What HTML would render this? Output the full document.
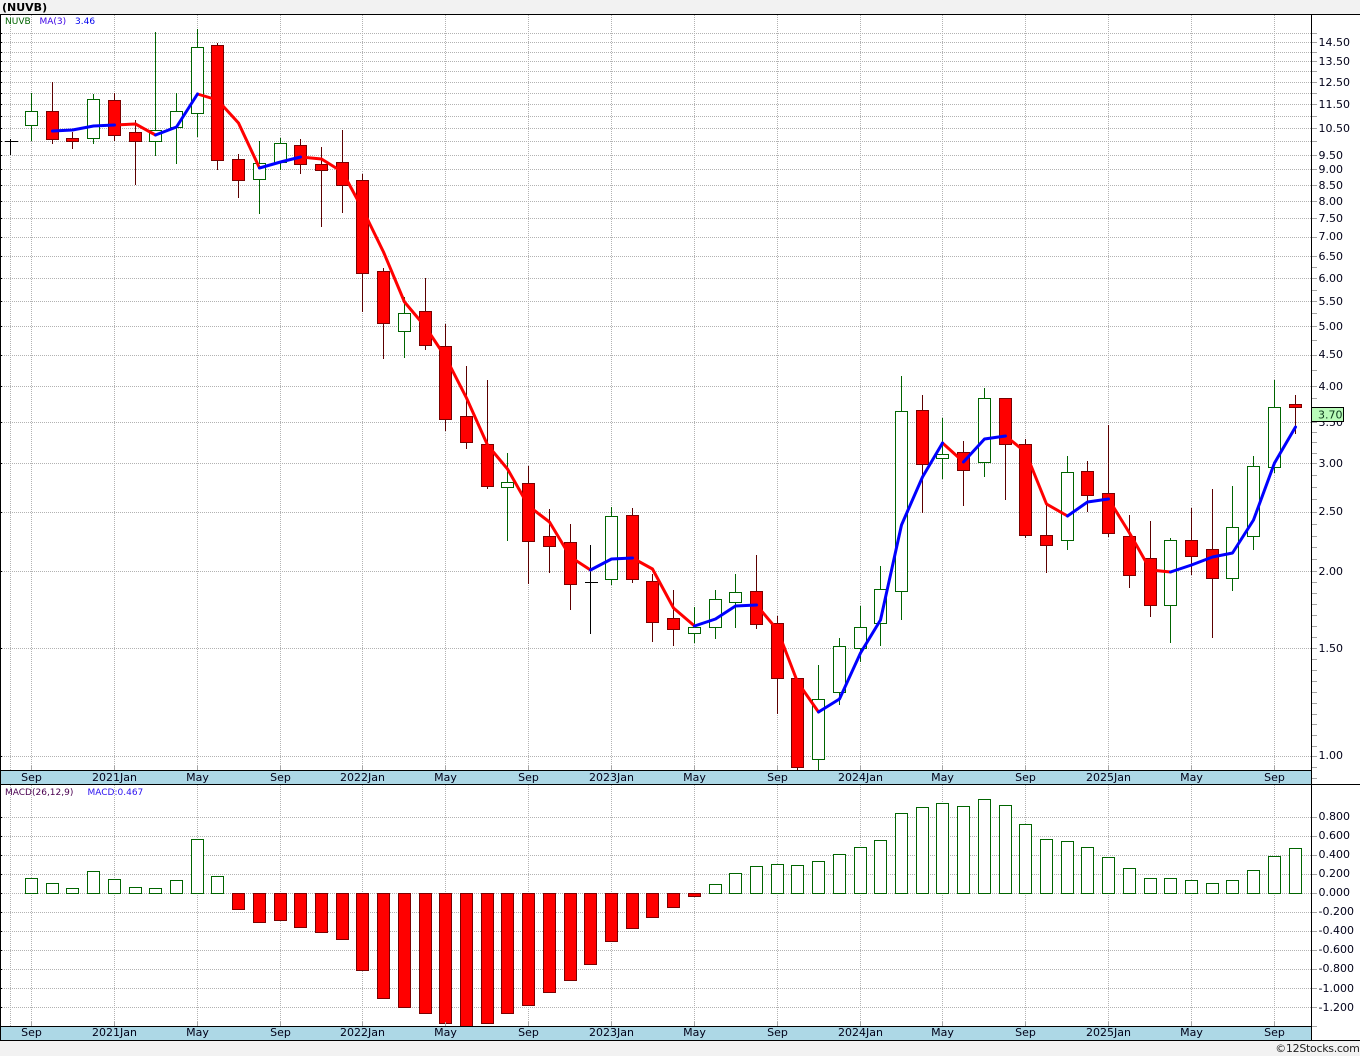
<!DOCTYPE html>
<html><head><meta charset="utf-8"><title>NUVB</title>
<style>
html,body{margin:0;padding:0;background:#f2f2f2;width:1360px;height:1056px;overflow:hidden}
svg{display:block}
text{font-family:"DejaVu Sans","Liberation Sans",sans-serif;font-size:11px;fill:#000018}
.l{font-size:9px}
</style></head><body>
<svg width="1360" height="1056" viewBox="0 0 1360 1056" xmlns="http://www.w3.org/2000/svg">
<rect x="0" y="0" width="1360" height="1056" fill="#f2f2f2"/>
<rect x="0" y="14" width="1360" height="1026" fill="#fff"/>
<!-- grid -->
<g stroke="#b2b2b2" stroke-width="1" stroke-dasharray="1 1" fill="none" shape-rendering="crispEdges">
<path d="M0 33.5H1311M0 42.5H1311M0 52.5H1311M0 61.5H1311M0 71.5H1311M0 82.5H1311M0 93.5H1311M0 104.5H1311M0 116.5H1311M0 128.5H1311M0 141.5H1311M0 155.5H1311M0 169.5H1311M0 185.5H1311M0 201.5H1311M0 218.5H1311M0 237.5H1311M0 256.5H1311M0 278.5H1311M0 301.5H1311M0 326.5H1311M0 355.5H1311M0 386.5H1311M0 422.5H1311M0 463.5H1311M0 512.5H1311M0 571.5H1311M0 648.5H1311M0 756.5H1311"/>
<path d="M0 817.5H1311M0 836.5H1311M0 855.5H1311M0 874.5H1311M0 893.5H1311M0 912.5H1311M0 931.5H1311M0 950.5H1311M0 969.5H1311M0 988.5H1311M0 1007.5H1311"/>
<path d="M10.5 15V770M31.5 15V770M114.5 15V770M197.5 15V770M280.5 15V770M362.5 15V770M445.5 15V770M528.5 15V770M611.5 15V770M694.5 15V770M777.5 15V770M860.5 15V770M942.5 15V770M1025.5 15V770M1108.5 15V770M1191.5 15V770M1274.5 15V770"/>
<path d="M10.5 785V1026M31.5 785V1026M114.5 785V1026M197.5 785V1026M280.5 785V1026M362.5 785V1026M445.5 785V1026M528.5 785V1026M611.5 785V1026M694.5 785V1026M777.5 785V1026M860.5 785V1026M942.5 785V1026M1025.5 785V1026M1108.5 785V1026M1191.5 785V1026M1274.5 785V1026"/>
</g>
<!-- wicks -->
<g fill="none" stroke-width="1" shape-rendering="crispEdges">
<path stroke="#000" d="M10.5 139V155M5 141.5H18M590.5 545V634M585 582.5H598"/>
<path stroke="#006400" d="M31.5 93V141M93.5 94V144M155.5 32V156M176.5 93V164M197.5 29V137M259.5 141V214M280.5 138V170M404.5 297V358M507.5 453V541M611.5 507V585M694.5 607V643M715.5 590V639M735.5 574V628M818.5 665V771M839.5 638V705M860.5 606V662M880.5 566V646M901.5 376V620M942.5 418V479M984.5 388V477M1067.5 456V550M1170.5 538V643M1232.5 486V591M1253.5 456V550M1274.5 380V473"/>
<path stroke="#5c0000" d="M52.5 82V144M72.5 132V149M114.5 93V141M135.5 120V185M217.5 43V170M238.5 154V198M300.5 139V174M321.5 147V227M342.5 130V213M362.5 174V312M383.5 268V359M425.5 278V350M445.5 324V431M466.5 366V449M487.5 380V489M528.5 466V584M549.5 509V573M570.5 524V610M632.5 508V583M652.5 574V642M673.5 590V646M756.5 555V629M777.5 616V714M797.5 678V770M922.5 395V513M963.5 441V506M1005.5 398V500M1025.5 439V538M1046.5 505V573M1087.5 461V512M1108.5 425V537M1129.5 515V588M1150.5 521V617M1191.5 508V575M1212.5 489V638M1295.5 395V434"/>
</g>
<!-- candle bodies -->
<g shape-rendering="crispEdges" stroke-width="1">
<path fill="#fff" stroke="#006400" d="M25.5 111.5h12V125.5h-12zM87.5 99.5h12V138.5h-12zM149.5 130.5h12V141.5h-12zM170.5 111.5h12V127.5h-12zM191.5 47.5h12V113.5h-12zM253.5 163.5h12V179.5h-12zM274.5 143.5h12V162.5h-12zM398.5 313.5h12V331.5h-12zM501.5 482.5h12V487.5h-12zM605.5 516.5h12V579.5h-12zM688.5 627.5h12V633.5h-12zM709.5 599.5h12V627.5h-12zM729.5 592.5h12V602.5h-12zM812.5 699.5h12V759.5h-12zM833.5 646.5h12V692.5h-12zM854.5 627.5h12V648.5h-12zM874.5 589.5h12V623.5h-12zM895.5 411.5h12V591.5h-12zM936.5 454.5h12V458.5h-12zM978.5 398.5h12V462.5h-12zM1061.5 472.5h12V540.5h-12zM1164.5 540.5h12V605.5h-12zM1226.5 527.5h12V578.5h-12zM1247.5 466.5h12V536.5h-12zM1268.5 407.5h12V467.5h-12z"/>
<path fill="#f00" stroke="#7a0000" d="M46.5 111.5h12V139.5h-12zM66.5 138.5h12V141.5h-12zM108.5 100.5h12V135.5h-12zM129.5 132.5h12V141.5h-12zM211.5 45.5h12V160.5h-12zM232.5 159.5h12V180.5h-12zM294.5 145.5h12V164.5h-12zM315.5 164.5h12V170.5h-12zM336.5 162.5h12V185.5h-12zM356.5 180.5h12V273.5h-12zM377.5 271.5h12V323.5h-12zM419.5 311.5h12V345.5h-12zM439.5 346.5h12V419.5h-12zM460.5 416.5h12V442.5h-12zM481.5 444.5h12V486.5h-12zM522.5 483.5h12V541.5h-12zM543.5 536.5h12V546.5h-12zM564.5 542.5h12V584.5h-12zM626.5 515.5h12V579.5h-12zM646.5 581.5h12V622.5h-12zM667.5 618.5h12V629.5h-12zM750.5 591.5h12V624.5h-12zM771.5 623.5h12V678.5h-12zM791.5 678.5h12V767.5h-12zM916.5 410.5h12V464.5h-12zM957.5 452.5h12V470.5h-12zM999.5 398.5h12V444.5h-12zM1019.5 444.5h12V535.5h-12zM1040.5 535.5h12V545.5h-12zM1081.5 471.5h12V495.5h-12zM1102.5 493.5h12V533.5h-12zM1123.5 536.5h12V575.5h-12zM1144.5 558.5h12V605.5h-12zM1185.5 540.5h12V556.5h-12zM1206.5 549.5h12V578.5h-12zM1289.5 404.5h12V407.5h-12z"/>
</g>
<!-- MA line -->
<g fill="none" stroke-width="3" stroke-linejoin="round" stroke-linecap="round">
<g stroke="#f00">
<path d="M114.5 125L135.5 124L155.5 135"/>
<path d="M197.5 94L217.5 100L238.5 123L259.5 168"/>
<path d="M300.5 157L321.5 159L342.5 172L362.5 209L383.5 252L404.5 302L425.5 327L445.5 357L466.5 398L487.5 445L507.5 469L528.5 506L549.5 522L570.5 557L590.5 570"/>
<path d="M632.5 558L652.5 569L673.5 608L694.5 626"/>
<path d="M756.5 605L777.5 630L797.5 682L818.5 712"/>
<path d="M942.5 443L963.5 462"/>
<path d="M1005.5 436L1025.5 452L1046.5 504L1067.5 516"/>
<path d="M1108.5 499L1129.5 533L1150.5 570L1170.5 572"/>
</g>
<g stroke="#00f">
<path d="M52.5 131L72.5 130L93.5 126L114.5 125"/>
<path d="M155.5 135L176.5 127L197.5 94"/>
<path d="M259.5 168L280.5 162L300.5 157"/>
<path d="M590.5 570L611.5 559L632.5 558"/>
<path d="M694.5 626L715.5 619L735.5 606L756.5 605"/>
<path d="M818.5 712L839.5 699L860.5 653L880.5 620L901.5 525L922.5 477L942.5 443"/>
<path d="M963.5 462L984.5 439L1005.5 436"/>
<path d="M1067.5 516L1087.5 502L1108.5 499"/>
<path d="M1170.5 572L1191.5 565L1212.5 557L1232.5 553L1253.5 520L1274.5 463L1295.5 427"/>
</g>
</g>
<!-- MACD bars -->
<g shape-rendering="crispEdges" stroke-width="1">
<path fill="#fff" stroke="#006400" d="M25.5 878.5h12V893.5h-12zM46.5 883.5h12V893.5h-12zM66.5 888.5h12V893.5h-12zM87.5 871.5h12V893.5h-12zM108.5 879.5h12V893.5h-12zM129.5 887.5h12V893.5h-12zM149.5 888.5h12V893.5h-12zM170.5 880.5h12V893.5h-12zM191.5 839.5h12V893.5h-12zM211.5 876.5h12V893.5h-12zM709.5 884.5h12V893.5h-12zM729.5 873.5h12V893.5h-12zM750.5 866.5h12V893.5h-12zM771.5 864.5h12V893.5h-12zM791.5 865.5h12V893.5h-12zM812.5 861.5h12V893.5h-12zM833.5 854.5h12V893.5h-12zM854.5 847.5h12V893.5h-12zM874.5 840.5h12V893.5h-12zM895.5 813.5h12V893.5h-12zM916.5 807.5h12V893.5h-12zM936.5 803.5h12V893.5h-12zM957.5 806.5h12V893.5h-12zM978.5 799.5h12V893.5h-12zM999.5 805.5h12V893.5h-12zM1019.5 824.5h12V893.5h-12zM1040.5 839.5h12V893.5h-12zM1061.5 841.5h12V893.5h-12zM1081.5 847.5h12V893.5h-12zM1102.5 857.5h12V893.5h-12zM1123.5 868.5h12V893.5h-12zM1144.5 878.5h12V893.5h-12zM1164.5 878.5h12V893.5h-12zM1185.5 880.5h12V893.5h-12zM1206.5 883.5h12V893.5h-12zM1226.5 880.5h12V893.5h-12zM1247.5 870.5h12V893.5h-12zM1268.5 856.5h12V893.5h-12zM1289.5 848.5h12V893.5h-12z"/>
<path fill="#f00" stroke="#7a0000" d="M232.5 893.5h12V909.5h-12zM253.5 893.5h12V922.5h-12zM274.5 893.5h12V920.5h-12zM294.5 893.5h12V927.5h-12zM315.5 893.5h12V932.5h-12zM336.5 893.5h12V939.5h-12zM356.5 893.5h12V970.5h-12zM377.5 893.5h12V998.5h-12zM398.5 893.5h12V1007.5h-12zM419.5 893.5h12V1013.5h-12zM439.5 893.5h12V1023.5h-12zM460.5 893.5h12V1026.5h-12zM481.5 893.5h12V1023.5h-12zM501.5 893.5h12V1013.5h-12zM522.5 893.5h12V1005.5h-12zM543.5 893.5h12V992.5h-12zM564.5 893.5h12V980.5h-12zM584.5 893.5h12V964.5h-12zM605.5 893.5h12V941.5h-12zM626.5 893.5h12V928.5h-12zM646.5 893.5h12V917.5h-12zM667.5 893.5h12V907.5h-12zM688.5 893.5h12V896.5h-12z"/>
</g>
<!-- bands -->
<rect x="0" y="770" width="1311" height="14" fill="#add8e6"/>
<rect x="0" y="1026" width="1311" height="14" fill="#add8e6"/>
<!-- small gray ticks -->
<g stroke="#a6a6a6" fill="none" shape-rendering="crispEdges">
<path d="M1312 33.5H1317M1312 42.5H1317M1312 52.5H1317M1312 61.5H1317M1312 71.5H1317M1312 82.5H1317M1312 93.5H1317M1312 104.5H1317M1312 116.5H1317M1312 128.5H1317M1312 141.5H1317M1312 155.5H1317M1312 169.5H1317M1312 185.5H1317M1312 201.5H1317M1312 218.5H1317M1312 237.5H1317M1312 256.5H1317M1312 267.5H1317M1312 278.5H1317M1312 290.5H1317M1312 301.5H1317M1312 313.5H1317M1312 326.5H1317M1312 340.5H1317M1312 355.5H1317M1312 370.5H1317M1312 386.5H1317M1312 398.5H1317M1312 422.5H1317M1312 432.5H1317M1312 442.5H1317M1312 453.5H1317M1312 463.5H1317M1312 475.5H1317M1312 487.5H1317M1312 499.5H1317M1312 512.5H1317M1312 524.5H1317M1312 536.5H1317M1312 547.5H1317M1312 559.5H1317M1312 571.5H1317M1312 582.5H1317M1312 593.5H1317M1312 604.5H1317M1312 615.5H1317M1312 626.5H1317M1312 637.5H1317M1312 648.5H1317M1312 659.5H1317M1312 670.5H1317M1312 681.5H1317M1312 692.5H1317M1312 703.5H1317M1312 714.5H1317M1312 724.5H1317M1312 735.5H1317M1312 746.5H1317M1312 756.5H1317M1312 767.5H1317M1312 778.5H1317"/>
<path d="M1312 817.5H1317M1312 836.5H1317M1312 855.5H1317M1312 874.5H1317M1312 893.5H1317M1312 912.5H1317M1312 931.5H1317M1312 950.5H1317M1312 969.5H1317M1312 988.5H1317M1312 1007.5H1317M1312 1026.5H1317"/>
<path d="M31.5 766V770M114.5 766V770M197.5 766V770M280.5 766V770M362.5 766V770M445.5 766V770M528.5 766V770M611.5 766V770M694.5 766V770M777.5 766V770M860.5 766V770M942.5 766V770M1025.5 766V770M1108.5 766V770M1191.5 766V770M1274.5 766V770M31.5 1022V1026M114.5 1022V1026M197.5 1022V1026M280.5 1022V1026M362.5 1022V1026M445.5 1022V1026M528.5 1022V1026M611.5 1022V1026M694.5 1022V1026M777.5 1022V1026M860.5 1022V1026M942.5 1022V1026M1025.5 1022V1026M1108.5 1022V1026M1191.5 1022V1026M1274.5 1022V1026"/>
</g>
<!-- frame lines -->
<g stroke="#000" fill="none" shape-rendering="crispEdges">
<path d="M0 14.5H1360M0 770.5H1311M0 784.5H1360M0 1026.5H1311M0 1040.5H1360M1311.5 14V1040M0.5 14V1040"/>
<path d="M1 33.5H2M1 42.5H2M1 52.5H2M1 61.5H2M1 71.5H2M1 82.5H2M1 93.5H2M1 104.5H2M1 116.5H2M1 128.5H2M1 141.5H2M1 155.5H2M1 169.5H2M1 185.5H2M1 201.5H2M1 218.5H2M1 237.5H2M1 256.5H2M1 278.5H2M1 301.5H2M1 326.5H2M1 355.5H2M1 386.5H2M1 422.5H2M1 463.5H2M1 512.5H2M1 571.5H2M1 648.5H2M1 756.5H2M1 817.5H2M1 836.5H2M1 855.5H2M1 874.5H2M1 893.5H2M1 912.5H2M1 931.5H2M1 950.5H2M1 969.5H2M1 988.5H2M1 1007.5H2"/>
</g>
<!-- title & legends -->
<text x="2" y="11" style="font-weight:bold;fill:#000">(NUVB)</text>
<text class="l" x="5" y="24" style="fill:#006400">NUVB</text>
<text class="l" x="39.5" y="24" style="fill:#3a00e6">MA(3)</text>
<text class="l" x="75" y="24" style="fill:#0000ee">3.46</text>
<text class="l" x="5" y="795" style="fill:#4a0050">MACD(26,12,9)</text>
<text class="l" x="87.5" y="795" style="fill:#2a10f0">MACD:0.467</text>
<!-- right axis labels -->
<g>
<text x="1318.5" y="46">14.50</text><text x="1318.5" y="65">13.50</text><text x="1318.5" y="86">12.50</text><text x="1318.5" y="108">11.50</text><text x="1318.5" y="132">10.50</text><text x="1318.5" y="159">9.50</text><text x="1318.5" y="173">9.00</text><text x="1318.5" y="189">8.50</text><text x="1318.5" y="205">8.00</text><text x="1318.5" y="222">7.50</text><text x="1318.5" y="240">7.00</text><text x="1318.5" y="260">6.50</text><text x="1318.5" y="282">6.00</text><text x="1318.5" y="305">5.50</text><text x="1318.5" y="330">5.00</text><text x="1318.5" y="358">4.50</text><text x="1318.5" y="390">4.00</text><text x="1318.5" y="426">3.50</text><text x="1318.5" y="467">3.00</text><text x="1318.5" y="515">2.50</text><text x="1318.5" y="575">2.00</text><text x="1318.5" y="652">1.50</text><text x="1318.5" y="759">1.00</text>
<text x="1318.5" y="820">0.800</text><text x="1318.5" y="839">0.600</text><text x="1318.5" y="858">0.400</text><text x="1318.5" y="877">0.200</text><text x="1318.5" y="896">0.000</text><text x="1318.5" y="915">-0.200</text><text x="1318.5" y="934">-0.400</text><text x="1318.5" y="953">-0.600</text><text x="1318.5" y="972">-0.800</text><text x="1318.5" y="992">-1.000</text><text x="1318.5" y="1011">-1.200</text>
</g>
<!-- price box -->
<rect x="1311.5" y="407.5" width="32" height="14" fill="#b9fbb9" stroke="#000" shape-rendering="crispEdges"/>
<text x="1318" y="418.5" style="fill:#0d3a1c">3.70</text>
<!-- date labels -->
<g text-anchor="middle">
<text x="31.5" y="781">Sep</text><text x="114.5" y="781">2021Jan</text><text x="197.5" y="781">May</text><text x="280.5" y="781">Sep</text><text x="362.5" y="781">2022Jan</text><text x="445.5" y="781">May</text><text x="528.5" y="781">Sep</text><text x="611.5" y="781">2023Jan</text><text x="694.5" y="781">May</text><text x="777.5" y="781">Sep</text><text x="860.5" y="781">2024Jan</text><text x="942.5" y="781">May</text><text x="1025.5" y="781">Sep</text><text x="1108.5" y="781">2025Jan</text><text x="1191.5" y="781">May</text><text x="1274.5" y="781">Sep</text>
<text x="31.5" y="1036">Sep</text><text x="114.5" y="1036">2021Jan</text><text x="197.5" y="1036">May</text><text x="280.5" y="1036">Sep</text><text x="362.5" y="1036">2022Jan</text><text x="445.5" y="1036">May</text><text x="528.5" y="1036">Sep</text><text x="611.5" y="1036">2023Jan</text><text x="694.5" y="1036">May</text><text x="777.5" y="1036">Sep</text><text x="860.5" y="1036">2024Jan</text><text x="942.5" y="1036">May</text><text x="1025.5" y="1036">Sep</text><text x="1108.5" y="1036">2025Jan</text><text x="1191.5" y="1036">May</text><text x="1274.5" y="1036">Sep</text>
</g>
<text x="1359.5" y="1052" text-anchor="end" style="font-size:11px;letter-spacing:-0.3px;fill:#222">©12Stocks.com</text>
</svg>
</body></html>
